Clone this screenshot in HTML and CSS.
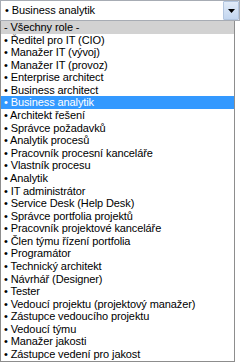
FILE: index.html
```html
<!DOCTYPE html>
<html lang="cs">
<head>
    <meta charset="UTF-8">
    <meta name="viewport" content="width=device-width, initial-scale=1.0">
    <title>Role</title>
    <link rel="stylesheet" href="styles.css">
</head>
<body>

<div class="combo">
    <div class="combo-field">
        <span class="combo-value">&bull; Business analytik</span>
        <span class="combo-button">
            <svg width="7" height="4" viewBox="0 0 7 4"><path d="M0 0H7L3.5 4Z" fill="#000"/></svg>
        </span>
    </div>
    <ul class="combo-list">
        <li class="item item-all">- Všechny role -</li>
        <li class="item">&bull; Ředitel pro IT (CIO)</li>
        <li class="item">&bull; Manažer IT (vývoj)</li>
        <li class="item">&bull; Manažer IT (provoz)</li>
        <li class="item">&bull; Enterprise architect</li>
        <li class="item">&bull; Business architect</li>
        <li class="item item-selected">&bull; Business analytik</li>
        <li class="item">&bull; Architekt řešení</li>
        <li class="item">&bull; Správce požadavků</li>
        <li class="item">&bull; Analytik procesů</li>
        <li class="item">&bull; Pracovník procesní kanceláře</li>
        <li class="item">&bull; Vlastník procesu</li>
        <li class="item">&bull; Analytik</li>
        <li class="item">&bull; IT administrátor</li>
        <li class="item">&bull; Service Desk (Help Desk)</li>
        <li class="item">&bull; Správce portfolia projektů</li>
        <li class="item">&bull; Pracovník projektové kanceláře</li>
        <li class="item">&bull; Člen týmu řízení portfolia</li>
        <li class="item">&bull; Programátor</li>
        <li class="item">&bull; Technický architekt</li>
        <li class="item">&bull; Návrhář (Designer)</li>
        <li class="item">&bull; Tester</li>
        <li class="item">&bull; Vedoucí projektu (projektový manažer)</li>
        <li class="item">&bull; Zástupce vedoucího projektu</li>
        <li class="item">&bull; Vedoucí týmu</li>
        <li class="item">&bull; Manažer jakosti</li>
        <li class="item">&bull; Zástupce vedení pro jakost</li>
    </ul>
</div>

</body>
</html>
```

FILE: styles.css
```css
body {
    margin: 0;
    background-color: #fff;
    font-family: "Liberation Sans", Arial, sans-serif;
    font-size: 11px;
    letter-spacing: -0.1px;
    color: #000;
}
.combo {
    width: 240px;
}
.combo-field {
    display: flex;
    align-items: stretch;
    height: 19px;
    border: 1px solid #a7acb4;
    background-color: #fff;
}
.combo-value {
    flex: 1;
    padding-left: 4px;
    line-height: 19px;
}
.combo-button {
    display: flex;
    align-items: center;
    justify-content: center;
    width: 14px;
    border: 1px solid #b3c6df;
    border-radius: 1px;
    background: linear-gradient(#e1ebf8, #c3d6ef);
}
.combo-list {
    list-style: none;
    margin: 0;
    padding: 0;
    width: 233px;
    border: 1px solid #8d8d8d;
    border-top: none;
}
.item {
    height: 12.59px;
    line-height: 12.59px;
    padding-left: 3px;
    white-space: nowrap;
}
.item-all {
    background-color: #d2d2d2;
}
.item-selected {
    background-color: #3399ff;
    color: #fff;
}
```
